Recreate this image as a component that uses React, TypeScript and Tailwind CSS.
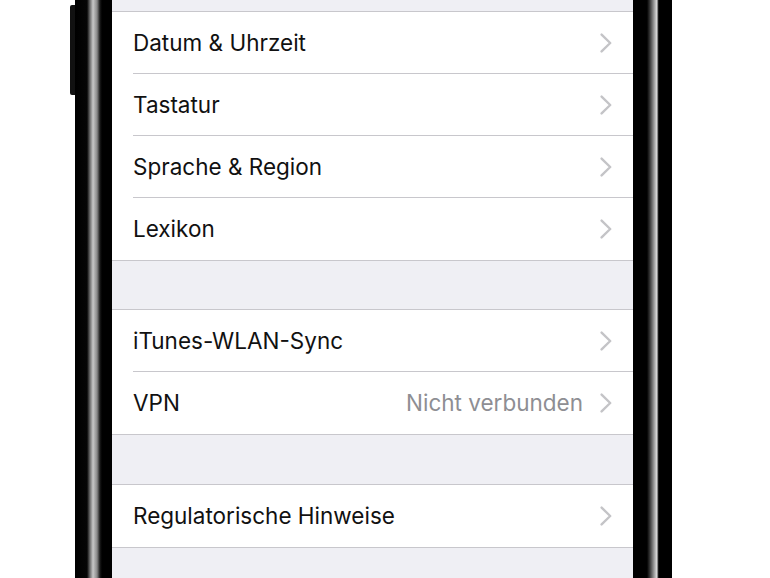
type Row = { label: string; detail?: string };

const groups: Row[][] = [
  [
    { label: "Datum & Uhrzeit" },
    { label: "Tastatur" },
    { label: "Sprache & Region" },
    { label: "Lexikon" },
  ],
  [{ label: "iTunes-WLAN-Sync" }, { label: "VPN", detail: "Nicht verbunden" }],
  [{ label: "Regulatorische Hinweise" }],
];

function Chevron() {
  return (
    <svg width="12" height="20" viewBox="0 0 12 20" fill="none">
      <polyline
        points="1.6,1.6 10.2,10 1.6,18.4"
        stroke="#c4c4c7"
        strokeWidth="2.4"
        strokeLinecap="round"
        strokeLinejoin="round"
      />
    </svg>
  );
}

function SettingsRow({ row, last }: { row: Row; last: boolean }) {
  return (
    <div className="flex h-[62px] bg-white pl-[21px]">
      <div
        className={`flex flex-1 items-center pr-[21px] ${
          last ? "" : "border-b border-[#c8c7cc]"
        }`}
      >
        <span className="flex-1 text-[22.5px] text-[#111]">{row.label}</span>
        {row.detail && (
          <span className="mr-[17px] text-[22.5px] text-[#8e8e93]">{row.detail}</span>
        )}
        <Chevron />
      </div>
    </div>
  );
}

export default function App() {
  return (
    <div
      className="flex h-[578px] w-[770px] overflow-hidden bg-white pl-[70px]"
      style={{ fontFamily: "Inter, 'Noto Sans', sans-serif" }}
    >
      {/* side button */}
      <div className="mt-[5px] h-[90px] w-[5px] rounded-l-[2px] bg-[#111]" />
      {/* left bezel */}
      <div className="w-[37px] bg-[linear-gradient(to_right,#000_0px,#050505_12px,#6e6e6e_15px,#c8c8c8_18px,#8a8a8a_22px,#1a1a1a_25px,#000_27px,#000_37px)]" />
      {/* screen */}
      <div className="flex w-[521px] flex-col bg-[#efeff4]">
        <div className="h-[11px] shrink-0" />
        {groups.map((group, gi) => (
          <div key={gi} className="flex shrink-0 flex-col">
            {gi > 0 && <div className={gi === 1 ? "h-[48px]" : "h-[49px]"} />}
            <div className="flex flex-col border-y border-[#c8c7cc]">
              {group.map((row, ri) => (
                <SettingsRow key={row.label} row={row} last={ri === group.length - 1} />
              ))}
            </div>
          </div>
        ))}
      </div>
      {/* right bezel */}
      <div className="w-[39px] bg-[linear-gradient(to_right,#000_0px,#000_14px,#3a3a3a_17px,#9a9a9a_21px,#e0e0e0_24px,#333_25px,#000_26px,#000_39px)]" />
    </div>
  );
}
